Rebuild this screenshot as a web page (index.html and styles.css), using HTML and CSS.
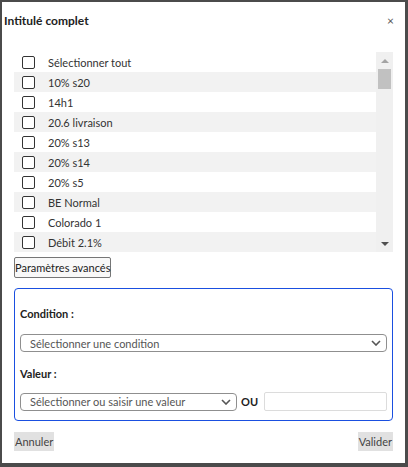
FILE: index.html
```html
<!DOCTYPE html>
<html lang="fr">
<head>
  <meta charset="UTF-8" />
  <meta name="viewport" content="width=device-width, initial-scale=1.0"/>
  <title>Intitulé complet</title>
  <link rel="stylesheet" href="styles.css">
</head>
<body>
  <div class="dialog">
    <div class="dialog-header">
      <span class="dialog-title">Intitulé complet</span>
      <button class="close-btn">×</button>
    </div>

    <!-- Liste des intitulés -->
    <div class="list">
      <ul class="items">
        <li class="item"><input type="checkbox"><span>Sélectionner tout</span></li>
        <li class="item"><input type="checkbox"><span>10% s20</span></li>
        <li class="item"><input type="checkbox"><span>14h1</span></li>
        <li class="item"><input type="checkbox"><span>20.6 livraison</span></li>
        <li class="item"><input type="checkbox"><span>20% s13</span></li>
        <li class="item"><input type="checkbox"><span>20% s14</span></li>
        <li class="item"><input type="checkbox"><span>20% s5</span></li>
        <li class="item"><input type="checkbox"><span>BE Normal</span></li>
        <li class="item"><input type="checkbox"><span>Colorado 1</span></li>
        <li class="item"><input type="checkbox"><span>Débit 2.1%</span></li>
      </ul>
      <div class="scrollbar">
        <span class="arrow arrow-up"></span>
        <span class="thumb"></span>
        <span class="track"></span>
        <span class="arrow arrow-down"></span>
      </div>
    </div>

    <button class="advanced-btn">Paramètres avancés</button>

    <!-- Filtre -->
    <div class="filter-box">
      <div class="field-label first">Condition :</div>
      <select class="select select-full">
        <option>Sélectionner une condition</option>
      </select>
      <div class="field-label second">Valeur :</div>
      <div class="value-row">
        <select class="select select-value">
          <option>Sélectionner ou saisir une valeur</option>
        </select>
        <span class="or">OU</span>
        <input type="text" class="value-input">
      </div>
    </div>

    <div class="actions">
      <button class="action-btn">Annuler</button>
      <button class="action-btn">Valider</button>
    </div>
  </div>
</body>
</html>
```

FILE: styles.css
```css
* {
  box-sizing: border-box;
}

html, body {
  height: 100%;
}

body {
  margin: 0;
  padding: 2px 3px 4px 2px;
  background: #4b4b4b;
  font-family: 'Lato', 'Open Sans', sans-serif;
  font-size: 11px;
  color: #333;
}

.dialog {
  background: #fff;
  height: 461px;
}

.dialog-header {
  height: 50px;
  display: flex;
  justify-content: space-between;
  align-items: flex-start;
  padding: 10px 11px 0 2px;
}

.dialog-title {
  font-size: 12px;
  font-weight: bold;
  line-height: 18px;
  color: #222;
}

.close-btn {
  border: none;
  background: none;
  padding: 0;
  font-family: inherit;
  font-size: 12px;
  line-height: 18px;
  color: #555;
  cursor: pointer;
}

.list {
  display: flex;
  height: 200px;
  margin: 0 12px;
}

.items {
  flex: 1;
  list-style: none;
  margin: 0;
  padding: 0;
  overflow: hidden;
}

.item {
  display: flex;
  align-items: center;
  gap: 13px;
  height: 20px;
  padding-left: 8px;
}

.item:nth-child(even) {
  background: #f2f2f2;
}

.item input {
  appearance: none;
  width: 13px;
  height: 13px;
  margin: 0;
  border: 1px solid #333;
  border-radius: 2px;
  background: #fff;
}

.scrollbar {
  width: 17px;
  background: #f0f0f0;
  display: flex;
  flex-direction: column;
  align-items: center;
}

.arrow {
  height: 17px;
  width: 17px;
  display: flex;
  justify-content: center;
  align-items: center;
}

.arrow::before {
  content: "";
  border-left: 4px solid transparent;
  border-right: 4px solid transparent;
}

.arrow-up::before {
  border-bottom: 4px solid #a3a3a3;
}

.arrow-down::before {
  border-top: 4px solid #505050;
}

.thumb {
  width: 13px;
  height: 20px;
  background: #c1c1c1;
}

.track {
  flex: 1;
}

.advanced-btn {
  display: block;
  margin: 5px 0 0 12px;
  height: 21px;
  padding: 0;
  font-family: inherit;
  font-size: 11px;
  color: #222;
  background: #f8f8f8;
  border: 1px solid #767676;
  border-radius: 2px;
}

.filter-box {
  margin: 10px 12px 0;
  height: 133px;
  padding: 0 5px;
  border: 1px solid #1a4fe0;
  border-radius: 4px;
}

.field-label {
  font-weight: bold;
  line-height: 18px;
  color: #222;
  margin: 11px 0;
}

.field-label.first {
  margin-top: 16px;
}

.field-label.second {
  margin: 13px 0 9px;
}

.select {
  appearance: none;
  height: 18px;
  padding: 0 24px 0 9px;
  font-family: inherit;
  font-size: 11px;
  color: #555;
  background: #fff url("data:image/svg+xml,%3Csvg xmlns='http://www.w3.org/2000/svg' width='10' height='6' viewBox='0 0 10 6'%3E%3Cpath d='M1 1l4 4 4-4' fill='none' stroke='%23555' stroke-width='1.6'/%3E%3C/svg%3E") no-repeat right 5px center;
  border: 1px solid #8f8f8f;
  border-radius: 4px;
}

.select-full {
  display: block;
  width: 367px;
}

.value-row {
  display: flex;
  align-items: center;
}

.select-value {
  flex: none;
  width: 217px;
}

.or {
  flex: none;
  font-weight: bold;
  color: #222;
  margin: 0 6px 0 4px;
}

.value-input {
  flex: 1;
  min-width: 0;
  height: 19px;
  border: 1px solid #dcdcdc;
  border-radius: 2px;
}

.actions {
  display: flex;
  justify-content: space-between;
  margin-top: 11px;
  padding: 0 12px;
}

.action-btn {
  height: 19px;
  padding: 0 1px;
  border: none;
  background: #e1e1e1;
  font-family: inherit;
  font-size: 11px;
  color: #444;
}
```
